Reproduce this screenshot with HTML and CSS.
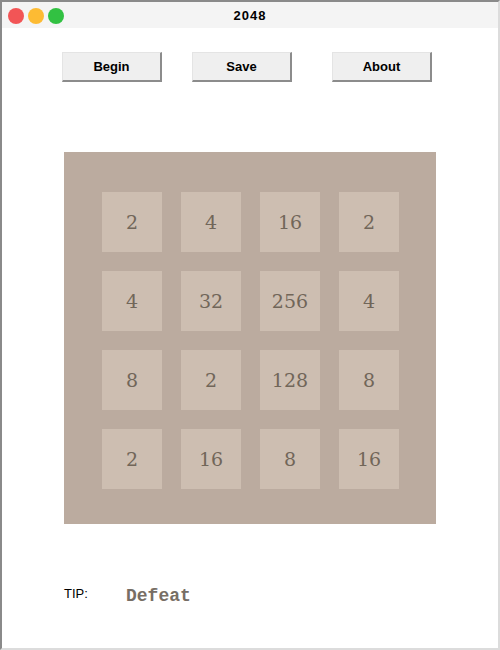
FILE: index.html
```html
<!DOCTYPE html>
<html>
<head>
<meta charset="utf-8">
<link rel="stylesheet" href="styles.css">
</head>
<body>
<div class="window">
  <div class="titlebar">
    <div class="dots">
      <span class="dot red"></span>
      <span class="dot yellow"></span>
      <span class="dot green"></span>
    </div>
    <div class="title">2048</div>
  </div>
  <div class="toolbar">
    <button class="btn b1">Begin</button>
    <button class="btn b2">Save</button>
    <button class="btn b3">About</button>
  </div>
  <div class="board">
    <div class="tile">2</div><div class="tile">4</div><div class="tile">16</div><div class="tile">2</div>
    <div class="tile">4</div><div class="tile">32</div><div class="tile">256</div><div class="tile">4</div>
    <div class="tile">8</div><div class="tile">2</div><div class="tile">128</div><div class="tile">8</div>
    <div class="tile">2</div><div class="tile">16</div><div class="tile">8</div><div class="tile">16</div>
  </div>
  <div class="tip">
    <span class="tip-label">TIP:</span>
    <span class="tip-text">Defeat</span>
  </div>
</div>
</body>
</html>
```
FILE: styles.css
```css
html, body {
  margin: 0;
  padding: 0;
  background: #ffffff;
}
.window {
  width: 500px;
  height: 650px;
  box-sizing: border-box;
  border-top: 2px solid #8a8a8a;
  border-left: 2px solid #8a8a8a;
  border-right: 2px solid #dcdcdc;
  border-bottom: 2px solid #dcdcdc;
  display: flex;
  flex-direction: column;
  font-family: "Liberation Sans", Arial, sans-serif;
}
.titlebar {
  height: 26px;
  background: #f4f4f4;
  display: flex;
  align-items: center;
  position: relative;
}
.dots {
  display: flex;
  gap: 4px;
  padding-left: 6px;
  padding-top: 1px;
}
.dot {
  width: 16px;
  height: 16px;
  border-radius: 50%;
  display: block;
}
.red { background: #f25556; }
.yellow { background: #fdbb33; }
.green { background: #32c142; }
.title {
  position: absolute;
  left: 0;
  right: 0;
  top: 6px;
  text-align: center;
  font-weight: bold;
  font-size: 13px;
  letter-spacing: 1px;
  color: #000;
}
.toolbar {
  display: flex;
  padding-left: 60px;
  margin-top: 24px;
}
.btn {
  width: 100px;
  height: 30px;
  box-sizing: border-box;
  background: #efefef;
  border-top: 1px solid #e4e4e4;
  border-left: 1px solid #e4e4e4;
  border-right: 2px solid #8c8c8c;
  border-bottom: 2px solid #8c8c8c;
  font-family: "Liberation Sans", Arial, sans-serif;
  font-weight: bold;
  font-size: 13px;
  color: #000;
  padding: 0;
  margin: 0;
}
.b2 { margin-left: 30px; }
.b3 { margin-left: 40px; }
.board {
  margin-top: 70px;
  margin-left: 62px;
  width: 372px;
  height: 372px;
  box-sizing: border-box;
  background: #bbab9f;
  padding: 40px 0 0 38px;
  display: grid;
  grid-template-columns: repeat(4, 60px);
  grid-template-rows: repeat(4, 60px);
  gap: 19px;
}
.tile {
  background: #cdbeb1;
  color: #716659;
  font-family: "DejaVu Serif", "Liberation Serif", serif;
  font-size: 19px;
  display: flex;
  align-items: center;
  justify-content: center;
}
.tip {
  display: flex;
  align-items: center;
  margin-top: 62px;
  margin-left: 62px;
}
.tip-label {
  font-size: 13px;
  color: #000;
  width: 62px;
  margin-top: -6px;
}
.tip-text {
  font-family: "Liberation Mono", "Courier New", monospace;
  font-weight: bold;
  font-size: 18px;
  color: #776e65;
}
```
